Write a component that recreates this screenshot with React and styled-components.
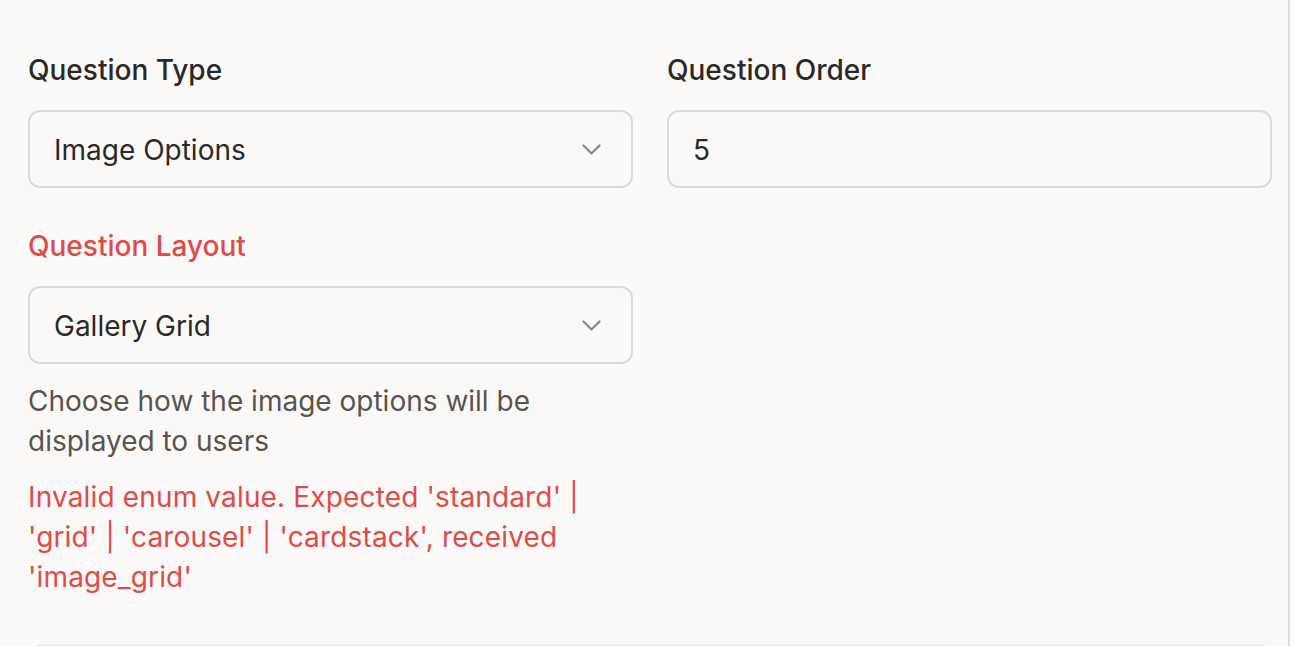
import React from 'react';
import styled, { createGlobalStyle } from 'styled-components';

const GlobalStyle = createGlobalStyle`
  html, body {
    margin: 0;
    padding: 0;
    background: #fcfbfa;
  }
  body {
    font-family: Inter, "Noto Sans", sans-serif;
    font-size: 28px;
    line-height: 40px;
    color: #2b2927;
  }
`;

function Chevron() {
  return (
    <svg width="19" height="11" viewBox="0 0 19 11" fill="none" stroke="#8a8886" strokeWidth="2.2" strokeLinecap="round" strokeLinejoin="round">
      <path d="M1.5 1.5l8 8 8-8" />
    </svg>
  );
}

function SelectField({ value }) {
  return (
    <Select>
      <Value>{value}</Value>
      <Chevron />
    </Select>
  );
}

function App() {
  return (
    <>
      <GlobalStyle />
      <Panel>
        <Grid>
          <Field>
            <Label>Question Type</Label>
            <SelectField value="Image Options" />
          </Field>
          <Field>
            <Label>Question Order</Label>
            <Select>
              <Value>5</Value>
            </Select>
          </Field>
          <Field>
            <Label $error>Question Layout</Label>
            <SelectField value="Gallery Grid" />
            <Help>Choose how the image options will be displayed to users</Help>
            <ErrorText>
              Invalid enum value. Expected 'standard' | 'grid' | 'carousel' | 'cardstack', received 'image_grid'
            </ErrorText>
          </Field>
        </Grid>
        <NextCard />
      </Panel>
    </>
  );
}

const Panel = styled.div`
  width: 1290px;
  height: 646px;
  box-sizing: border-box;
  padding: 50px 0 0 28px;
  border-right: 2px solid #dedcda;
  background: #faf9f7;
  overflow: hidden;
  display: flex;
  flex-direction: column;
`;

const Grid = styled.div`
  display: grid;
  grid-template-columns: 605px 605px;
  column-gap: 34px;
  row-gap: 38px;
`;

const Field = styled.div`
  display: flex;
  flex-direction: column;
`;

const Label = styled.div`
  font-weight: 500;
  color: ${p => (p.$error ? '#e04a49' : '#2b2927')};
  margin-bottom: 20px;
`;

const Select = styled.div`
  height: 78px;
  box-sizing: border-box;
  border: 2px solid #dcdad8;
  border-radius: 12px;
  background: #faf9f7;
  display: flex;
  align-items: center;
  justify-content: space-between;
  padding: 1px 30px 0 24px;
`;

const Value = styled.span`
  color: #2b2927;
`;

const Help = styled.p`
  margin: 17px 0 0;
  color: #5b534d;
`;

const ErrorText = styled.p`
  margin: 16px 0 0;
  letter-spacing: 0.15px;
  color: #e04a49;
`;

const NextCard = styled.div`
  margin-top: 48px;
  margin-right: 16px;
  height: 40px;
  flex-shrink: 0;
  border: 2px solid #e2e0de;
  border-radius: 12px;
`;

export default App;
